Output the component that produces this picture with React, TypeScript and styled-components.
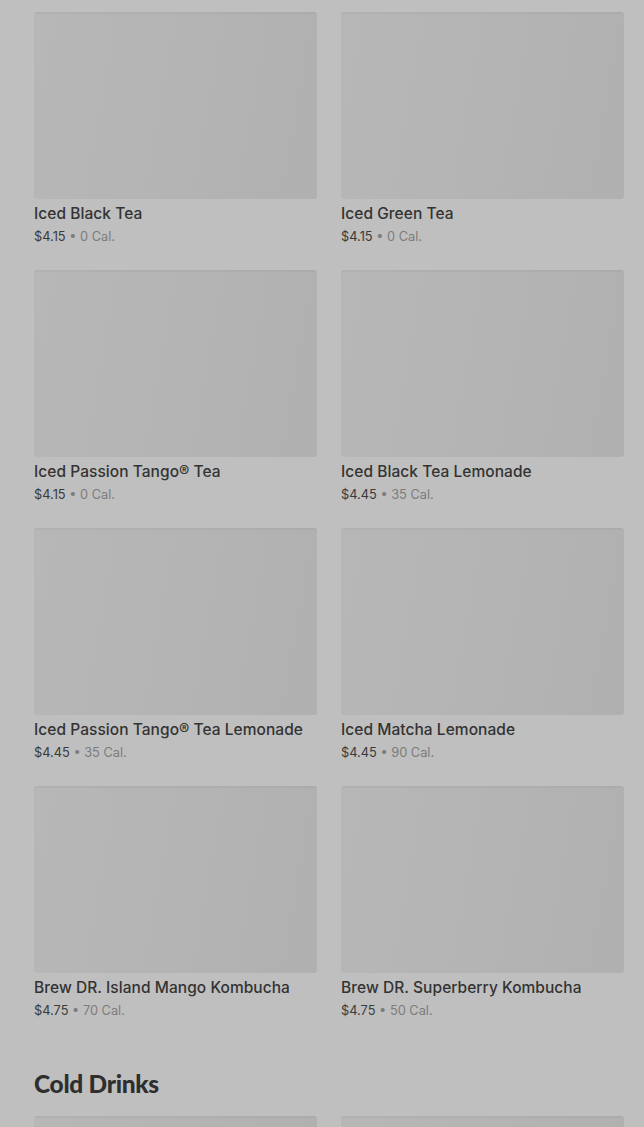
import styled, { createGlobalStyle } from "styled-components";

const GlobalStyle = createGlobalStyle`
  html, body {
    margin: 0;
    padding: 0;
    background: #bfbfbf;
  }
  body {
    font-family: "Inter", "Liberation Sans", sans-serif;
  }
`;

const StyledMenuPage = styled.main`
  padding: 12px 20px 0 34px;
  display: flex;
  flex-direction: column;
  height: 1127px;
  box-sizing: border-box;
  overflow: hidden;
`;

const ProductGrid = styled.div`
  display: grid;
  grid-template-columns: 283px 283px;
  column-gap: 24px;
`;

const Card = styled.div`
  display: flex;
  flex-direction: column;
  height: 258px;
`;

const Thumb = styled.div`
  height: 187px;
  border-radius: 3px;
  background: linear-gradient(100deg, #b7b7b7 0%, #b4b4b4 50%, #b0b0b0 100%);
  box-shadow: inset 0 2px 0 rgba(0, 0, 0, 0.03);
`;

const Title = styled.div`
  margin-top: 5px;
  font-size: 15.5px;
  line-height: 20px;
  font-weight: 500;
  color: #333333;
  letter-spacing: 0.05px;
`;

const Meta = styled.div`
  margin-top: 4px;
  font-size: 12.8px;
  line-height: 18px;
  color: #3a3a3a;
  span {
    color: #7c7c7c;
  }
`;

const SectionTitle = styled.h2`
  margin: 26px 0 18px;
  font-family: "Lato", "Inter", sans-serif;
  font-size: 24.5px;
  line-height: 28px;
  font-weight: 900;
  color: #2e2e2e;
  letter-spacing: -0.3px;
`;

const products = [
  { name: "Iced Black Tea", price: "$4.15", cal: "0 Cal." },
  { name: "Iced Green Tea", price: "$4.15", cal: "0 Cal." },
  { name: "Iced Passion Tango® Tea", price: "$4.15", cal: "0 Cal." },
  { name: "Iced Black Tea Lemonade", price: "$4.45", cal: "35 Cal." },
  { name: "Iced Passion Tango® Tea Lemonade", price: "$4.45", cal: "35 Cal." },
  { name: "Iced Matcha Lemonade", price: "$4.45", cal: "90 Cal." },
  { name: "Brew DR. Island Mango Kombucha", price: "$4.75", cal: "70 Cal." },
  { name: "Brew DR. Superberry Kombucha", price: "$4.75", cal: "50 Cal." },
];

const ProductCard = ({ name, price, cal }: { name: string; price: string; cal: string }) => (
  <Card>
    <Thumb />
    <Title>{name}</Title>
    <Meta>
      {price} <span>• {cal}</span>
    </Meta>
  </Card>
);

const App = () => {
  return (
    <>
      <GlobalStyle />
      <StyledMenuPage>
        <ProductGrid>
          {products.map((p) => (
            <ProductCard key={p.name} {...p} />
          ))}
        </ProductGrid>
        <SectionTitle>Cold Drinks</SectionTitle>
        <ProductGrid>
          <Card>
            <Thumb />
          </Card>
          <Card>
            <Thumb />
          </Card>
        </ProductGrid>
      </StyledMenuPage>
    </>
  );
};

export default App;
